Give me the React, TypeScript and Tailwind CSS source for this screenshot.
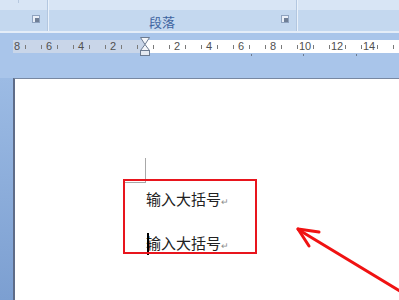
import React from "react";

function Launcher() {
  return (
    <svg width="8" height="8" viewBox="0 0 8 8" className="block">
      <rect x="0.5" y="0.5" width="7" height="7" fill="#e9eff8" stroke="#8fa3bf" />
      <rect x="3" y="3" width="4" height="4" fill="#6f7f96" />
    </svg>
  );
}

function RulerCell({ i }: { i: number }) {
  const off = (i - 16) * 8;
  let content: React.ReactNode = null;
  if (off !== 0 && off % 32 === 0) {
    content = <span className="text-[11px] leading-none text-[#505050]">{Math.abs(off) / 16}</span>;
  } else if (Math.abs(off) % 16 === 8) {
    content = <span className="block w-px h-[4px] bg-[#7a7a7a]" />;
  }
  return (
    <div className="w-[8px] shrink-0 flex items-center justify-center whitespace-nowrap">{content}</div>
  );
}

export default function App() {
  const cells = Array.from({ length: 48 }, (_, i) => i);
  return (
    <div
      className="relative w-[399px] h-[300px] overflow-hidden flex flex-col bg-[#9bb9e2]"
      style={{ fontFamily: '"Liberation Sans", "Noto Sans CJK SC", sans-serif' }}
    >
      {/* Ribbon */}
      <div className="h-[31px] flex shrink-0">
        <div className="w-[47px] flex flex-col">
          <div className="h-[10px] bg-[#d8e5f5] flex">
            <div className="w-[19px] border-r border-[#b7c9e0] h-[3px]" />
          </div>
          <div className="flex-1 bg-[#c4d8ef] flex justify-end items-start pt-[5px] pr-[7px]">
            <Launcher />
          </div>
        </div>
        <div className="w-[2px] bg-[#eaf2fb] border-l border-[#b3c7e0]" />
        <div className="w-[247px] flex flex-col">
          <div className="h-[10px] bg-[#d8e5f5]" />
          <div className="flex-1 bg-[#c4d8ef] flex items-start relative">
            <span
              className="ml-[100px] mt-[3px] text-[13px] leading-[18px] text-[#3e64a0]"
              style={{ fontFamily: '"Noto Sans CJK SC", sans-serif' }}
            >
              段落
            </span>
            <div className="ml-auto mt-[5px] mr-[7px]">
              <Launcher />
            </div>
          </div>
        </div>
        <div className="w-[2px] bg-[#eaf2fb] border-l border-[#b3c7e0]" />
        <div className="flex-1 flex flex-col">
          <div className="h-[10px] bg-[#d8e5f5]" />
          <div className="flex-1 bg-[#c4d8ef]" />
        </div>
      </div>
      <div className="h-[2px] bg-[#e4edf8] shrink-0" />

      {/* Ruler area */}
      <div className="h-[45px] shrink-0 bg-[#a9c5ea] pt-[7px] pl-[13px]">
        <div className="relative h-[13px] flex bg-[linear-gradient(to_right,#c9d6e9_132px,#ffffff_132px)]">
          {cells.map((i) => (
            <RulerCell key={i} i={i} />
          ))}
          <svg className="absolute left-[127px] top-[-3px]" width="10" height="20" viewBox="0 0 10 20">
            <polygon points="0.5,0.5 9.5,0.5 5,7.5" fill="#f4f6fa" stroke="#6c7b91" />
            <polygon points="5,7.5 9.5,13.5 0.5,13.5" fill="#f4f6fa" stroke="#6c7b91" />
            <rect x="0.5" y="13.5" width="9" height="5" fill="#e4e9f1" stroke="#6c7b91" />
          </svg>
          <span className="absolute left-[238px] top-[14px] w-px h-[2px] bg-[#6b7a90]" />
          <span className="absolute left-[290px] top-[14px] w-px h-[2px] bg-[#6b7a90]" />
          <span className="absolute left-[343px] top-[14px] w-px h-[2px] bg-[#6b7a90]" />
        </div>
      </div>

      {/* Document */}
      <div className="flex-1 flex bg-[linear-gradient(to_bottom,#9cbbe4,#7c9fd1)]">
        <div className="w-[13px] shrink-0" />
        <div className="flex-1 bg-white border-l-2 border-t border-l-[#5e6c88] border-t-[#7888a2] pl-[108px] pt-[79px]">
          <div className="w-[23px] h-[25px] border-r border-b border-[#a8a8a8]" />
          <div
            className="ml-[23px] mt-[6px] text-[15px] leading-[20px] text-[#222]"
            style={{ fontFamily: '"Noto Sans CJK SC", sans-serif' }}
          >
            输入大括号<span className="text-[9px] text-[#8c8c8c]">↵</span>
          </div>
          <div
            className="relative ml-[23px] mt-[21px] text-[15px] leading-[20px] text-[#222]"
            style={{ fontFamily: '"Noto Sans CJK SC", sans-serif' }}
          >
            <span className="absolute left-[1px] top-[0px] w-[2px] h-[22px] bg-black" />
            输入大括号<span className="text-[9px] text-[#8c8c8c]">↵</span>
          </div>
        </div>
      </div>

      {/* Red box annotation */}
      <div className="absolute left-[123px] top-[179px] w-[134px] h-[75px] border-2 border-[#e8151d]" />

      {/* Arrow */}
      <svg className="absolute left-0 top-0 pointer-events-none" width="399" height="300" viewBox="0 0 399 300">
        <g stroke="#f01212" strokeWidth="3" strokeLinecap="round" fill="none">
          <line x1="400" y1="291" x2="299" y2="230" />
          <line x1="298" y1="229" x2="319" y2="232" />
          <line x1="298" y1="229" x2="309" y2="246" />
        </g>
      </svg>
    </div>
  );
}
